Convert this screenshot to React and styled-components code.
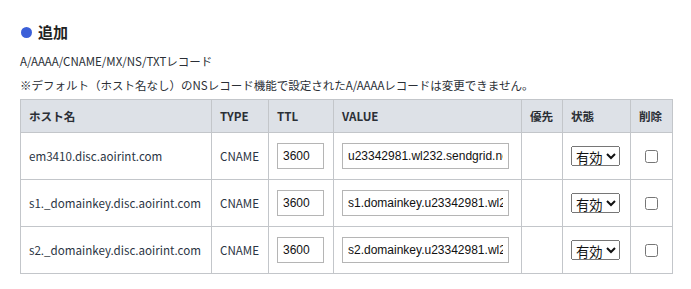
import React from "react";
import styled, { createGlobalStyle } from "styled-components";

const Global = createGlobalStyle`
  html, body { margin: 0; padding: 0; background: #fff; }
  body { font-family: "Noto Sans CJK JP", "Noto Sans", sans-serif; color: #2b2f36; }
`;

const Page = styled.div`
  padding: 21px 20px 16px 20px;
`;

const Heading = styled.h2`
  display: flex;
  align-items: center;
  gap: 6px;
  margin: 0 0 6px 0;
  font-size: 15px;
  font-weight: 700;
  line-height: 22px;
  color: #222;
`;

const Dot = styled.span`
  width: 11px;
  height: 11px;
  margin-left: 1px;
  border-radius: 50%;
  background: #3b5fd8;
`;

const Note = styled.p`
  margin: 0;
  font-size: 11.5px;
  line-height: 24px;
  color: #2b2f36;
`;

const Notes = styled.div`
  margin-bottom: 2px;
`;

const Table = styled.table`
  width: 652px;
  border-collapse: collapse;
  table-layout: fixed;
  font-size: 11.6px;
`;

const Th = styled.th`
  background: #dde1e7;
  border: 1px solid #c3c6ca;
  height: 32px;
  padding: 0 8px;
  text-align: left;
  font-weight: 700;
  font-size: 11.6px;
  color: #2b2f36;
  white-space: nowrap;
`;

const Td = styled.td`
  border: 1px solid #c3c6ca;
  height: 46px;
  padding: 0 8px;
  text-align: ${(p) => (p.$center ? "center" : "left")};
  color: #2b3544;
  white-space: nowrap;
  overflow: hidden;
`;

const TextInput = styled.input`
  box-sizing: border-box;
  width: ${(p) => p.$w}px;
  height: 26px;
  border: 1px solid #b5b5b5;
  padding: 1px 5px;
  font-family: "Liberation Sans", Arial, sans-serif;
  font-size: 12px;
  color: #111;
  background: #fff;
  margin: 0;
  vertical-align: middle;
`;

const Select = styled.select`
  font-family: "Noto Sans CJK JP", sans-serif;
  font-size: 13.33px;
  height: 20px;
  margin: 0;
  padding: 0;
  vertical-align: middle;
  color: #111;
`;

const Check = styled.input`
  width: 13px;
  height: 13px;
  margin: 0 0 2px 0;
  vertical-align: middle;
`;

const rows = [
  { host: "em3410.disc.aoirint.com", value: "u23342981.wl232.sendgrid.net" },
  { host: "s1._domainkey.disc.aoirint.com", value: "s1.domainkey.u23342981.wl232.sendgrid.net" },
  { host: "s2._domainkey.disc.aoirint.com", value: "s2.domainkey.u23342981.wl232.sendgrid.net" },
];

export default function App() {
  return (
    <Page>
      <Global />
      <Heading>
        <Dot />
        追加
      </Heading>
      <Notes>
        <Note>A/AAAA/CNAME/MX/NS/TXTレコード</Note>
        <Note>※デフォルト（ホスト名なし）のNSレコード機能で設定されたA/AAAAレコードは変更できません。</Note>
      </Notes>
      <Table>
        <colgroup>
          <col style={{ width: 191 }} />
          <col style={{ width: 57 }} />
          <col style={{ width: 65 }} />
          <col style={{ width: 188 }} />
          <col style={{ width: 41 }} />
          <col style={{ width: 68 }} />
          <col style={{ width: 42 }} />
        </colgroup>
        <thead>
          <tr>
            <Th>ホスト名</Th>
            <Th>TYPE</Th>
            <Th>TTL</Th>
            <Th>VALUE</Th>
            <Th>優先</Th>
            <Th>状態</Th>
            <Th>削除</Th>
          </tr>
        </thead>
        <tbody>
          {rows.map((r) => (
            <tr key={r.host}>
              <Td>{r.host}</Td>
              <Td>CNAME</Td>
              <Td>
                <TextInput $w={47} defaultValue="3600" />
              </Td>
              <Td>
                <TextInput $w={167} defaultValue={r.value} />
              </Td>
              <Td />
              <Td>
                <Select defaultValue="1">
                  <option value="1">有効</option>
                  <option value="0">無効</option>
                </Select>
              </Td>
              <Td $center>
                <Check type="checkbox" />
              </Td>
            </tr>
          ))}
        </tbody>
      </Table>
    </Page>
  );
}
